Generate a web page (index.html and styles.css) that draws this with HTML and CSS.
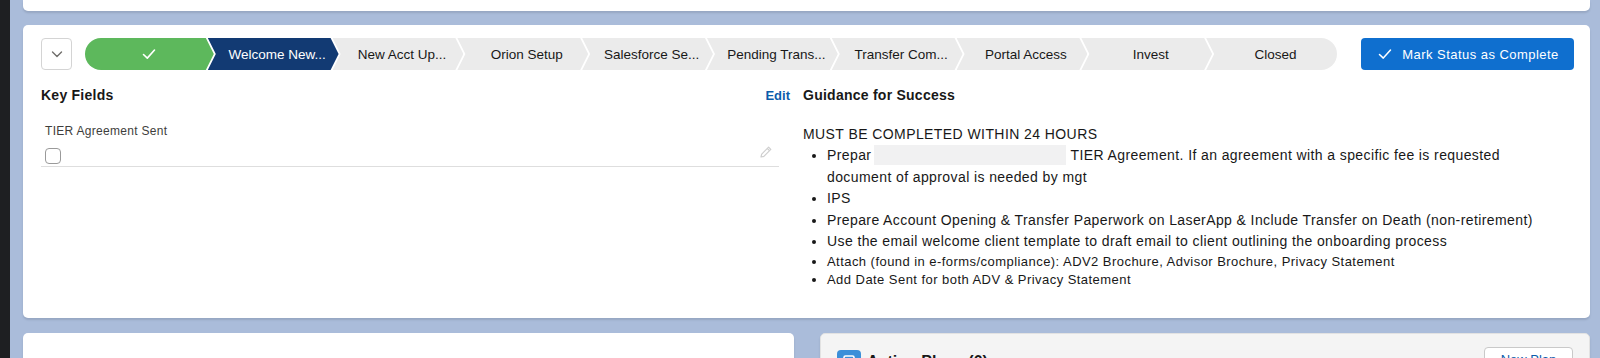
FILE: index.html
```html
<!DOCTYPE html>
<html lang="en">
<head>
<meta charset="utf-8">
<title>Path</title>
<link rel="stylesheet" href="styles.css">
</head>
<body>
<div class="strip"></div>
<div class="stage">
  <div class="card top-card"></div>

  <div class="card main-card">
    <div class="path-row">
      <button class="toggle" aria-label="Expand">
        <svg width="14" height="14" viewBox="0 0 14 14"><path d="M2.5 5l4.5 4.5L11.5 5" fill="none" stroke="#706e6b" stroke-width="1.4" stroke-linecap="round" stroke-linejoin="round"/></svg>
      </button>
      <div class="path">
        <div class="seg seg-first seg-done">
          <svg width="14" height="12" viewBox="0 0 14 12"><path d="M1.5 6.5l3.8 3.6L12.5 2" fill="none" stroke="#fff" stroke-width="1.6" stroke-linecap="round" stroke-linejoin="round"/></svg>
        </div>
        <div class="seg seg-current">Welcome New...</div>
        <div class="seg">New Acct Up...</div>
        <div class="seg">Orion Setup</div>
        <div class="seg">Salesforce Se...</div>
        <div class="seg">Pending Trans...</div>
        <div class="seg">Transfer Com...</div>
        <div class="seg">Portal Access</div>
        <div class="seg">Invest</div>
        <div class="seg seg-last">Closed</div>
      </div>
      <button class="complete-btn">
        <svg width="14" height="12" viewBox="0 0 14 12"><path d="M1.5 6.5l3.8 3.6L12.5 2" fill="none" stroke="#fff" stroke-width="1.5" stroke-linecap="round" stroke-linejoin="round"/></svg>
        <span>Mark Status as Complete</span>
      </button>
    </div>

    <div class="details">
      <div class="key-fields">
        <div class="section-head">
          <h2 class="section-title">Key Fields</h2>
          <a class="edit-link" href="#">Edit</a>
        </div>
        <div class="field">
          <div class="field-label">TIER Agreement Sent</div>
          <div class="field-value">
            <span class="checkbox"></span>
            <svg class="pencil" width="14" height="14" viewBox="0 0 14 14"><path d="M2 12l.7-2.9L9.6 2.2l2.2 2.2-6.9 6.9z" fill="none" stroke="#cfcfcf" stroke-width="1.2" stroke-linejoin="round"/><path d="M8.3 3.5l2.2 2.2" stroke="#cfcfcf" stroke-width="1.2"/></svg>
          </div>
        </div>
      </div>

      <div class="guidance">
        <h2 class="section-title">Guidance for Success</h2>
        <p class="must">MUST BE COMPLETED WITHIN 24 HOURS</p>
        <ul class="steps">
          <li>Prepar<span class="redact"></span> TIER Agreement. If an agreement with a specific fee is requested<br>document of approval is needed by mgt</li>
          <li>IPS</li>
          <li>Prepare Account Opening &amp; Transfer Paperwork on LaserApp &amp; Include Transfer on Death (non-retirement)</li>
          <li>Use the email welcome client template to draft email to client outlining the onboarding process</li>
          <li class="small">Attach (found in e-forms/compliance): ADV2 Brochure, Advisor Brochure, Privacy Statement</li>
          <li class="small">Add Date Sent for both ADV &amp; Privacy Statement</li>
        </ul>
      </div>
    </div>
  </div>

  <div class="bottom-row">
    <div class="card bottom-left"></div>
    <div class="card related">
      <div class="related-head">
        <span class="related-icon">
          <svg width="24" height="24" viewBox="0 0 24 24"><rect width="24" height="24" rx="4" fill="#3b8fd9"/><rect x="7" y="6" width="10" height="12" rx="1.5" fill="none" stroke="#fff" stroke-width="1.6"/><path d="M9.5 10h5M9.5 13h5" stroke="#fff" stroke-width="1.4"/></svg>
        </span>
        <h2 class="related-title">Action Plans (0)</h2>
        <button class="new-btn">New Plan</button>
      </div>
    </div>
  </div>
</div>
</body>
</html>
```
FILE: styles.css
```css
* { box-sizing: border-box; }

html, body {
  margin: 0;
  padding: 0;
  height: 358px;
  overflow: hidden;
}

body {
  display: flex;
  font-family: "Liberation Sans", Arial, sans-serif;
  color: #181818;
  background: #aabcda;
}

.strip {
  width: 10px;
  flex: none;
  background: #1e1f22;
}

.stage {
  flex: 1;
  padding: 0 10px 0 13px;
  display: flex;
  flex-direction: column;
}

.card {
  background: #fff;
  border-radius: 5px;
  box-shadow: 0 2px 2px rgba(60, 70, 90, 0.18);
}

.top-card {
  height: 11px;
  border-radius: 0 0 5px 5px;
  flex: none;
}

.main-card {
  margin-top: 14px;
  height: 293px;
  flex: none;
  padding: 13px 16px 0 18px;
}

/* ---------- path row ---------- */
.path-row {
  display: flex;
  align-items: center;
  height: 32px;
}

.toggle {
  width: 31px;
  height: 32px;
  flex: none;
  margin-right: 13px;
  padding: 0;
  border: 1px solid #d4d4d4;
  border-radius: 4px;
  background: #fff;
  display: flex;
  align-items: center;
  justify-content: center;
}

.path {
  flex: 1;
  display: flex;
  height: 32px;
  margin-right: 24px;
}

.seg {
  flex: 1 1 0;
  min-width: 0;
  margin-left: -6px;
  height: 32px;
  background: #ebebeb;
  color: #181818;
  font-size: 13.5px;
  display: flex;
  align-items: center;
  justify-content: center;
  padding-left: 8px;
  white-space: nowrap;
  clip-path: polygon(0 0, calc(100% - 8px) 0, 100% 50%, calc(100% - 8px) 100%, 0 100%, 8px 50%);
}

.seg-first {
  flex: 1 1 6px;
  margin-left: 0;
  padding-left: 0;
  border-radius: 16px 0 0 16px;
  clip-path: polygon(0 0, calc(100% - 8px) 0, 100% 50%, calc(100% - 8px) 100%, 0 100%);
}

.seg-last {
  border-radius: 0 16px 16px 0;
  clip-path: polygon(0 0, 100% 0, 100% 100%, 0 100%, 8px 50%);
}

.seg-done {
  background: #5db85c;
}

.seg-current {
  background: #123a73;
  color: #fff;
}

.complete-btn {
  width: 213px;
  height: 32px;
  flex: none;
  border: none;
  border-radius: 4px;
  background: #0f6fcf;
  color: #fff;
  font-family: inherit;
  font-size: 13px;
  letter-spacing: 0.45px;
  display: flex;
  align-items: center;
  justify-content: center;
  gap: 10px;
  padding: 0 0 0 2px;
}

/* ---------- details ---------- */
.details {
  margin-top: 15px;
  display: grid;
  grid-template-columns: 749px 1fr;
  column-gap: 13px;
}

.section-head {
  display: flex;
  justify-content: space-between;
  align-items: center;
  height: 20px;
}

.section-title {
  margin: 0;
  font-size: 14px;
  font-weight: 700;
  line-height: 20px;
  letter-spacing: 0.25px;
}

.edit-link {
  color: #0b5cab;
  font-size: 13px;
  font-weight: 700;
  text-decoration: none;
}

.field {
  width: 738px;
  margin-top: 18px;
  padding-left: 4px;
  border-bottom: 1px solid #dedede;
  padding-bottom: 2px;
}

.field-label {
  font-size: 12px;
  line-height: 16px;
  letter-spacing: 0.3px;
  color: #3e3e3c;
  margin-bottom: 9px;
}

.field-value {
  display: flex;
  justify-content: space-between;
  align-items: flex-start;
  padding-right: 6px;
}

.checkbox {
  width: 16px;
  height: 16px;
  border: 1px solid #9a9a9a;
  border-radius: 4px;
  background: #fff;
}

.pencil {
  margin-top: -3px;
}

.guidance {
  min-width: 0;
}

.must {
  margin: 18.5px 0 0;
  font-size: 14px;
  line-height: 21.5px;
  letter-spacing: 0.42px;
}

.steps {
  margin: 0;
  padding-left: 24px;
  font-size: 14px;
  line-height: 21.5px;
  letter-spacing: 0.4px;
}

.steps li.small {
  font-size: 13px;
  line-height: 18.5px;
  letter-spacing: 0.45px;
}

.redact {
  display: inline-block;
  width: 192px;
  height: 20px;
  vertical-align: -5px;
  background: #f1f1f2;
  margin-left: 3px;
}

/* ---------- bottom row ---------- */
.bottom-row {
  margin-top: 15px;
  display: grid;
  grid-template-columns: 771px 1fr;
  column-gap: 26px;
  flex: 1;
}

.bottom-left {
  border-radius: 5px 5px 0 0;
}

.related {
  background: #f4f4f4;
  border: 1px solid #e2e2e2;
  border-radius: 5px 5px 0 0;
}

.related-head {
  display: flex;
  align-items: flex-start;
  padding: 16px 16px 0 16px;
}

.related-icon {
  display: flex;
  width: 24px;
  height: 24px;
  margin-right: 6px;
}

.related-title {
  margin: 1px 0 0;
  font-size: 16px;
  font-weight: 700;
  line-height: 22px;
  flex: 1;
}

.new-btn {
  width: 89px;
  height: 32px;
  margin-top: -3px;
  padding: 4px 0 0;
  border: 1px solid #c9c9c9;
  border-radius: 4px;
  background: #fff;
  color: #0b5cab;
  font-family: inherit;
  font-size: 13px;
  display: flex;
  align-items: flex-start;
  justify-content: center;
}
```
